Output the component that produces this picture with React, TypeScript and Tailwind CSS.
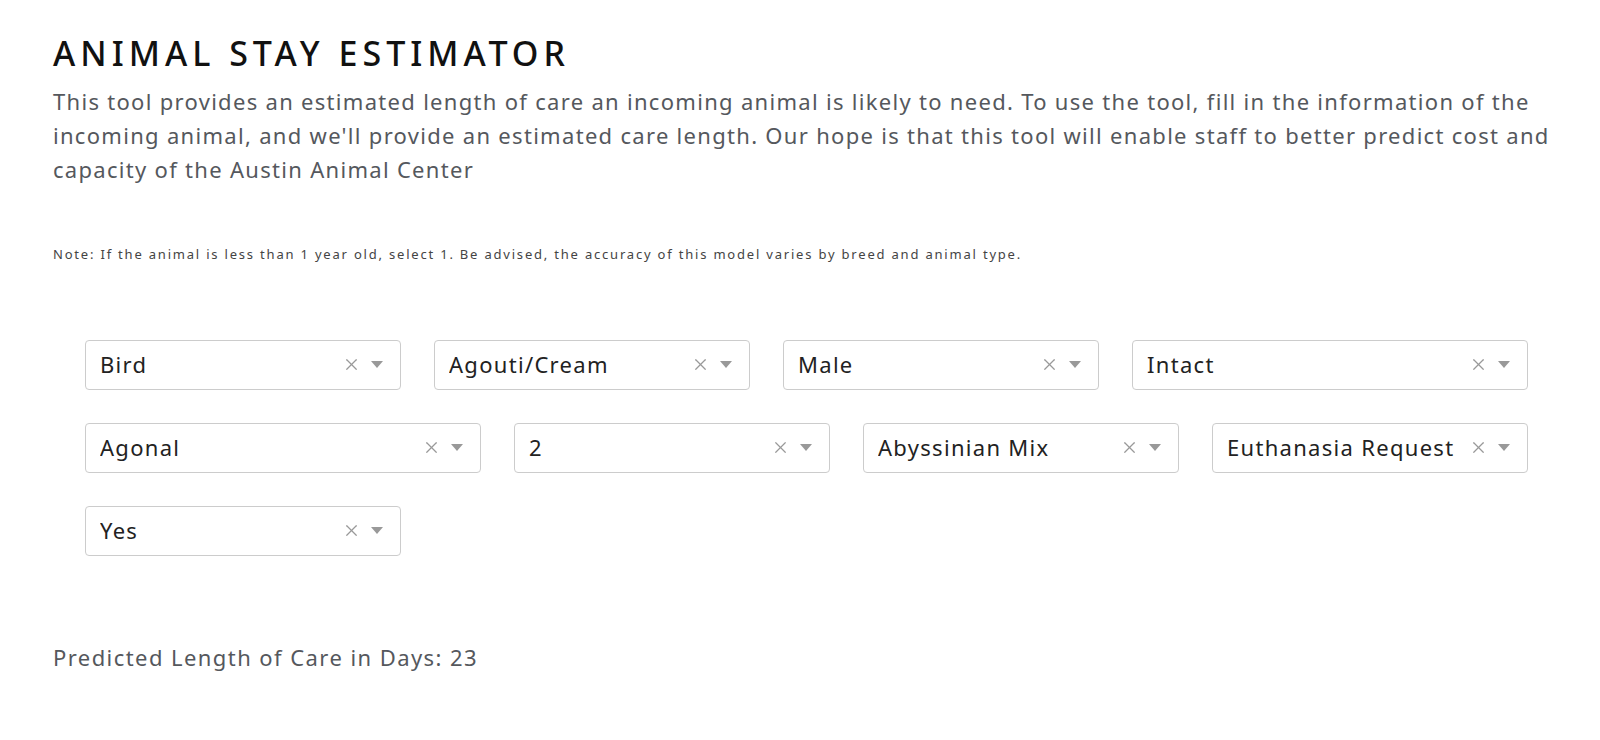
import { X } from 'lucide-react';

interface Field {
  value: string;
  width: string;
}

const rows: Field[][] = [
  [
    { value: 'Bird', width: 'w-[316px]' },
    { value: 'Agouti/Cream', width: 'w-[316px]' },
    { value: 'Male', width: 'w-[316px]' },
    { value: 'Intact', width: 'w-[396px]' },
  ],
  [
    { value: 'Agonal', width: 'w-[396px]' },
    { value: '2', width: 'w-[316px]' },
    { value: 'Abyssinian Mix', width: 'w-[316px]' },
    { value: 'Euthanasia Request', width: 'w-[316px]' },
  ],
  [{ value: 'Yes', width: 'w-[316px]' }],
];

function SelectBox({ value, width }: Field) {
  return (
    <div
      className={`${width} h-[50px] flex items-center rounded-[4px] border border-[#cccccc] bg-white pl-[14px] pr-[17px] pb-[2px]`}
    >
      <span className="flex-1 truncate text-[22px] tracking-[1.3px] text-[#222222]">{value}</span>
      <X className="h-[19px] w-[19px] text-[#999999] mr-[10px]" strokeWidth={1.5} />
      <svg width="12" height="7" viewBox="0 0 12 7" className="text-[#999999]">
        <path d="M0 0h12L6 7z" fill="currentColor" />
      </svg>
    </div>
  );
}

export default function App() {
  return (
    <div className="min-h-screen bg-white font-['Noto_Sans','Open_Sans',sans-serif]">
      <div className="pl-[53px] pr-[20px] pt-[32px]">
        <h1 className="text-[34px] leading-[42px] tracking-[5px] text-[#111111] font-medium">
          ANIMAL STAY ESTIMATOR
        </h1>
        <p className="mt-[10px] text-[22px] leading-[34px] tracking-[1.3px] text-[#55585d]">
          This tool provides an estimated length of care an incoming animal is likely to need. To use the tool, fill in
          the information of the incoming animal, and we'll provide an estimated care length. Our hope is that this tool
          will enable staff to better predict cost and capacity of the Austin Animal Center
        </p>
        <p className="mt-[59px] text-[13px] leading-[18px] tracking-[1.8px] text-[#444444]">
          Note: If the animal is less than 1 year old, select 1. Be advised, the accuracy of this model varies by breed
          and animal type.
        </p>

        <div className="mt-[77px] pl-[32px] flex flex-col gap-y-[33px]">
          {rows.map((row, i) => (
            <div key={i} className="flex gap-x-[33px]">
              {row.map((f) => (
                <SelectBox key={f.value} {...f} />
              ))}
            </div>
          ))}
        </div>

        <p className="mt-[86px] text-[22px] leading-[30px] tracking-[1.43px] text-[#55585d]">
          Predicted Length of Care in Days: 23
        </p>
      </div>
    </div>
  );
}
